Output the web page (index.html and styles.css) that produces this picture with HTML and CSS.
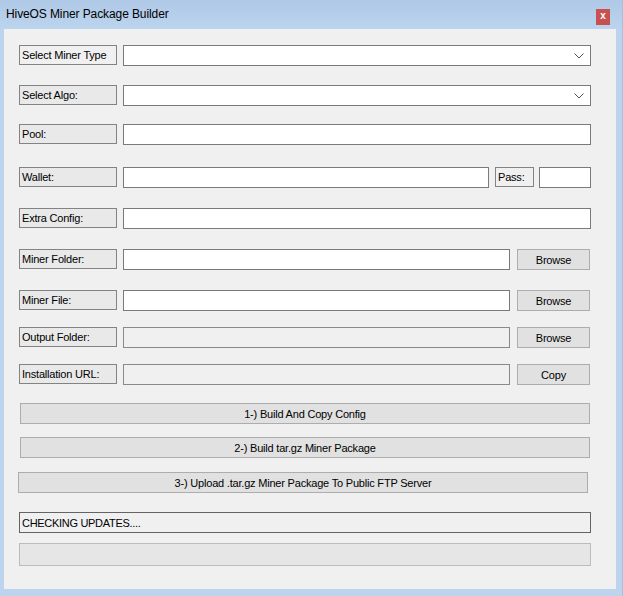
FILE: index.html
```html
<!DOCTYPE html>
<html>
<head>
<meta charset="utf-8">
<title>HiveOS Miner Package Builder</title>
<link rel="stylesheet" href="styles.css">
</head>
<body>
<div class="window">
  <div class="titlebar">
    <span class="title">HiveOS Miner Package Builder</span>
    <span class="close">x</span>
  </div>
  <div class="client">
    <div class="row mt16">
      <div class="label light">Select Miner Type</div>
      <div class="combo"><svg class="chev" width="10" height="6" viewBox="0 0 10 6"><polyline points="0.5,0.5 5,5 9.5,0.5" fill="none" stroke="#505050" stroke-width="1"/></svg></div>
    </div>
    <div class="row mt19">
      <div class="label">Select Algo:</div>
      <div class="combo"><svg class="chev" width="10" height="6" viewBox="0 0 10 6"><polyline points="0.5,0.5 5,5 9.5,0.5" fill="none" stroke="#505050" stroke-width="1"/></svg></div>
    </div>
    <div class="row mt18">
      <div class="label">Pool:</div>
      <div class="input grow"></div>
    </div>
    <div class="row mt22">
      <div class="label">Wallet:</div>
      <div class="input wallet"></div>
      <div class="label pass">Pass:</div>
      <div class="input passin"></div>
    </div>
    <div class="row mt20">
      <div class="label">Extra Config:</div>
      <div class="input grow"></div>
    </div>
    <div class="row mt20">
      <div class="label">Miner Folder:</div>
      <div class="input path"></div>
      <div class="btn small">Browse</div>
    </div>
    <div class="row mt20">
      <div class="label">Miner File:</div>
      <div class="input path"></div>
      <div class="btn small">Browse</div>
    </div>
    <div class="row mt16">
      <div class="label">Output Folder:</div>
      <div class="input path disabled"></div>
      <div class="btn small">Browse</div>
    </div>
    <div class="row mt16">
      <div class="label">Installation URL:</div>
      <div class="input path disabled"></div>
      <div class="btn small">Copy</div>
    </div>
    <div class="btn wide b1">1-) Build And Copy Config</div>
    <div class="btn wide b2">2-) Build tar.gz Miner Package</div>
    <div class="btn wide b3">3-) Upload .tar.gz Miner Package To Public FTP Server</div>
    <div class="status">CHECKING UPDATES....</div>
    <div class="progress"></div>
  </div>
</div>
</body>
</html>
```
FILE: styles.css
```css
* { box-sizing: border-box; }
html, body { margin: 0; padding: 0; }
body {
  width: 623px;
  height: 596px;
  overflow: hidden;
  font-family: "Liberation Sans", Arial, sans-serif;
  font-size: 11px;
  color: #000;
}
.window {
  width: 623px;
  height: 596px;
  background: #bcd4ee;
  border-right: 1px solid #a7c1de;
  display: flex;
  flex-direction: column;
}
.titlebar {
  height: 29px;
  flex: none;
  display: flex;
  align-items: center;
  justify-content: space-between;
  padding: 0 12px 1px 6px;
  background: linear-gradient(#aec8e6, #bcd4ee);
}
.title {
  font-size: 12px;
  color: #000;
  letter-spacing: -0.1px;
}
.close {
  width: 14px;
  height: 16px;
  background: #c75050;
  color: #fff;
  font-weight: bold;
  font-size: 10px;
  line-height: 14px;
  text-align: center;
  margin-top: 5px;
}
.client {
  flex: none;
  width: 612px;
  height: 560px;
  margin-left: 4px;
  background: #f0f0f0;
  display: flex;
  flex-direction: column;
  padding-left: 15px;
}
.row {
  display: flex;
  height: 21px;
  align-items: stretch;
}
.mt16 { margin-top: 16px; }
.mt18 { margin-top: 18px; }
.mt19 { margin-top: 19px; }
.mt20 { margin-top: 20px; }
.mt22 { margin-top: 22px; }
.label {
  width: 98px;
  height: 20px;
  flex: none;
  border: 1px solid #838383;
  background: #e9e9e9;
  padding-left: 2px;
  display: flex;
  align-items: center;
  white-space: nowrap;
  letter-spacing: -0.2px;
}
.label.light { background: #f0f0f0; }
.combo, .input {
  margin-left: 6px;
  height: 21px;
  border: 1px solid #7a7a7a;
  background: #fff;
}
.combo {
  width: 468px;
  position: relative;
}
.chev {
  position: absolute;
  right: 6px;
  top: 7px;
}
.grow { width: 468px; }
.wallet { width: 366px; }
.label.pass {
  width: 39px;
  margin-left: 6px;
  background: #f0f0f0;
  height: 20px;
}
.passin { width: 52px; margin-left: 5px; }
.path { width: 387px; }
.input.disabled {
  background: #f0f0f0;
  border-color: #8a8a8a;
}
.btn {
  background: #e1e1e1;
  border: 1px solid #adadad;
  display: flex;
  align-items: center;
  justify-content: center;
  white-space: nowrap;
  letter-spacing: -0.2px;
}
.btn.small {
  width: 73px;
  margin-left: 7px;
  height: 21px;
}
.btn.wide {
  width: 570px;
  height: 21px;
}
.b1 { margin-top: 18px; margin-left: 1px; }
.b2 { margin-top: 13px; margin-left: 1px; }
.b3 { margin-top: 14px; margin-left: -1px; }
.status {
  margin-top: 19px;
  width: 572px;
  height: 21px;
  border: 1px solid #646464;
  background: #f0f0f0;
  padding-left: 2px;
  display: flex;
  align-items: center;
  letter-spacing: -0.3px;
}
.progress {
  margin-top: 10px;
  width: 572px;
  height: 23px;
  border: 1px solid #bcbcbc;
  background: #e6e6e6;
}
```
